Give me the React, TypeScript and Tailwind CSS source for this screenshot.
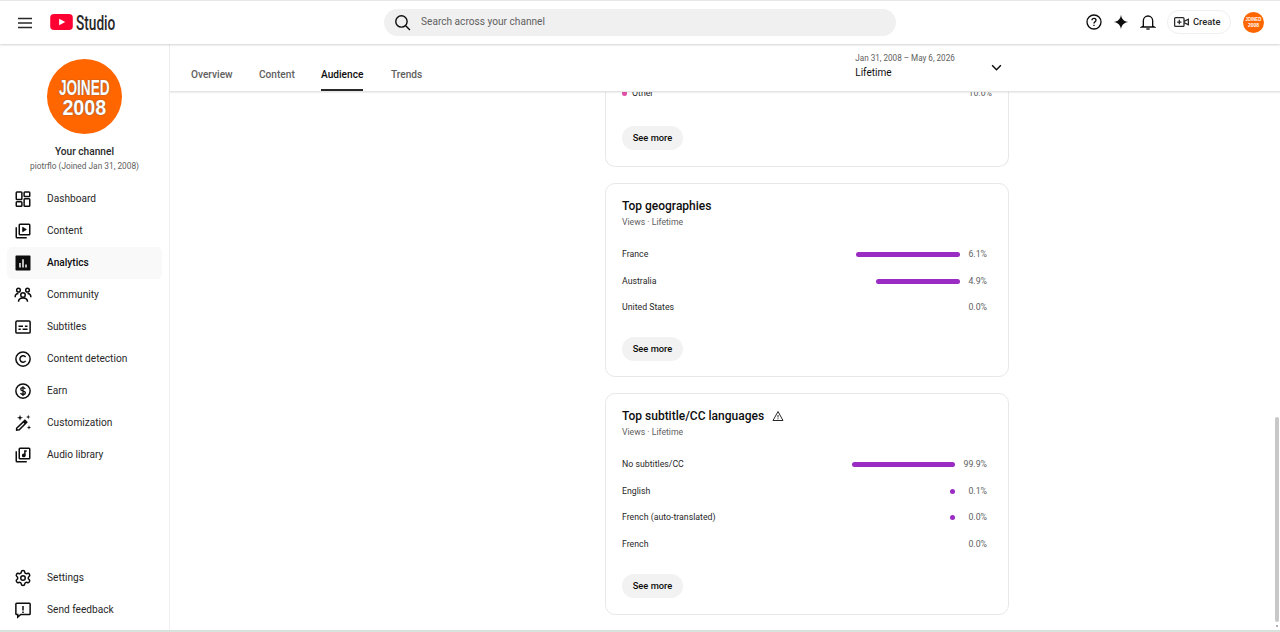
import { Settings } from "lucide-react";
import type { ReactNode } from "react";

const iconClass = "w-[18px] h-[18px] shrink-0 text-[#0d0d0d]";

function Icon({ children }: { children: ReactNode }) {
    return (
        <svg viewBox="0 0 24 24" fill="none" stroke="currentColor" strokeWidth="2" className={iconClass}>
            {children}
        </svg>
    );
}

const navItems: { label: string; active?: boolean; icon: ReactNode }[] = [
    {
        label: "Dashboard",
        icon: (
            <Icon>
                <rect x="3" y="2.500" width="7.500" height="10" rx="1" />
                <rect x="13.500" y="2.500" width="7.500" height="6" rx="1" />
                <rect x="3" y="15.500" width="7.500" height="6" rx="1" />
                <rect x="13.500" y="11.500" width="7.500" height="10" rx="1" />
            </Icon>
        ),
    },
    {
        label: "Content",
        icon: (
            <Icon>
                <rect x="7" y="3" width="14" height="14" rx="1" />
                <path d="M3 7v13a1 1 0 0 0 1 1h13" />
                <path d="M11.500 7l5 3-5 3z" fill="currentColor" strokeWidth="1" />
            </Icon>
        ),
    },
    {
        label: "Analytics",
        active: true,
        icon: (
            <svg viewBox="0 0 24 24" className={iconClass}>
                <path
                    fill="currentColor"
                    fillRule="evenodd"
                    d="M3 2h18a1 1 0 0 1 1 1v18a1 1 0 0 1-1 1H3a1 1 0 0 1-1-1V3a1 1 0 0 1 1-1zM7 12v6h2v-6zM11 7v11h2V7zM15 14v4h2v-4z"
                />
            </svg>
        ),
    },
    {
        label: "Community",
        icon: (
            <Icon>
                <circle cx="12" cy="12" r="3" />
                <circle cx="6" cy="5.500" r="2.400" />
                <circle cx="18" cy="5.500" r="2.400" />
                <path d="M6 21c0-3.500 2.500-5 6-5s6 1.500 6 5" />
                <path d="M1.500 15c0-3 1.500-5 4.500-5M22.500 15c0-3-1.500-5-4.500-5" />
            </Icon>
        ),
    },
    {
        label: "Subtitles",
        icon: (
            <Icon>
                <rect x="2.500" y="4" width="19" height="16" rx="1.500" />
                <path d="M6 11h6M14.500 11h3.500M6 15h3M11.500 15h6.500" />
            </Icon>
        ),
    },
    {
        label: "Content detection",
        icon: (
            <Icon>
                <circle cx="12" cy="12" r="9.500" />
                <path d="M15.500 9.500a4.200 4.200 0 1 0 0 5" />
            </Icon>
        ),
    },
    {
        label: "Earn",
        icon: (
            <Icon>
                <circle cx="12" cy="12" r="9.500" />
                <path d="M15 9.200c-.5-1.200-1.700-1.700-3-1.700-1.700 0-3 .9-3 2.300 0 3.200 6.200 1.500 6.200 4.500 0 1.400-1.400 2.200-3.200 2.200-1.500 0-2.700-.6-3.200-1.900M12 5.500v13" strokeWidth="1.700" />
            </Icon>
        ),
    },
    {
        label: "Customization",
        icon: (
            <svg viewBox="0 0 24 24" className={iconClass}>
                <path d="M14.500 8.500l2.500 2.500L7 21l-3.500.5L3.500 19z" fill="none" stroke="currentColor" strokeWidth="2" />
                <path d="M11.500 10.500l3 3 2.500-2.500-2.500-2.500z" fill="currentColor" />
                <path d="M8 1l1 3 3 1-3 1-1 3-1-3-3-1 3-1zM19 1l.8 2.200L22 4l-2.200.8L19 7l-.8-2.200L16 4l2.200-.8zM20 15l.8 2.200L23 18l-2.200.8L20 21l-.8-2.200L17 18l2.200-.8z" fill="currentColor" />
            </svg>
        ),
    },
    {
        label: "Audio library",
        icon: (
            <Icon>
                <rect x="7" y="3" width="14" height="14" rx="1" />
                <path d="M3 7v13a1 1 0 0 0 1 1h13" />
                <circle cx="13" cy="12.500" r="1.500" fill="currentColor" />
                <path d="M14.500 12.500V6.500h2.500" />
            </Icon>
        ),
    },
];

function Sidebar() {
    return (
        <aside className="w-[170px] shrink-0 border-r border-[#efefef] flex flex-col pt-[15px] pb-[4px] bg-white">
            <div className="flex flex-col items-center">
                <div className="w-[75px] h-[75px] rounded-full bg-[#ff6600] flex flex-col items-center justify-center text-white font-bold leading-[20px] text-[20px] font-['Liberation_Sans',sans-serif] [text-shadow:0_0_1.5px_#555]">
                    <span className="scale-x-[0.68] scale-y-[1.12]">JOINED</span>
                    <span className="scale-x-[0.98] scale-y-[1.12]">2008</span>
                </div>
                <div className="mt-[11px] text-[10.13px] leading-[14px] font-medium text-[#282828]">Your channel</div>
                <div className="mt-[1px] text-[8.33px] leading-[13px] text-[#606060]">piotrflo (Joined Jan 31, 2008)</div>
            </div>

            <nav className="mt-[10px] px-[7px] flex flex-col">
                {navItems.map((item) => (
                    <div
                        key={item.label}
                        className={`h-[32px] pl-[7px] rounded-[5px] flex items-center gap-[15px] text-[10.13px] ${item.active ? "bg-[#f9f9f9] font-medium text-[#0d0d0d]" : "text-[#282828]"}`}
                    >
                        {item.icon}
                        <span>{item.label}</span>
                    </div>
                ))}
            </nav>

            <div className="mt-auto px-[7px] flex flex-col">
                <div className="h-[32px] pl-[7px] flex items-center gap-[15px] text-[10.13px] text-[#282828]">
                    <Settings className={iconClass} strokeWidth={2} />
                    <span>Settings</span>
                </div>
                <div className="h-[32px] pl-[7px] flex items-center gap-[15px] text-[10.13px] text-[#282828]">
                    <Icon>
                        <path d="M3.500 3h17a1 1 0 0 1 1 1v13a1 1 0 0 1-1 1H9l-4 3.500V18H3.500a1 1 0 0 1-1-1V4a1 1 0 0 1 1-1z" />
                        <path d="M12 6.500v6M12 14v2" />
                    </Icon>
                    <span>Send feedback</span>
                </div>
            </div>
        </aside>
    );
}

function Header() {
    return (
        <header className="relative z-20 h-[44px] shrink-0 bg-white border-t border-[#e8e8e8] shadow-[0_1px_2px_rgba(0,0,0,0.18)] flex items-center pl-[18px] pr-[16px]">
            <svg viewBox="0 0 14 12" className="w-[14px] h-[12px] text-[#282828]" fill="none" stroke="currentColor" strokeWidth="1.400">
                <path d="M0 1.500h14M0 6h14M0 10.500h14" />
            </svg>
            <div className="ml-[18px] flex items-center w-[66px]">
                <svg viewBox="0 0 24 17" className="w-[23px] h-[16px] shrink-0 -mt-px">
                    <rect width="24" height="17" rx="4" fill="#ff0033" />
                    <path d="M9.500 5l6.500 3.500-6.500 3.500z" fill="#fff" />
                </svg>
                <span className="ml-[3px] inline-block origin-left scale-x-[0.65] text-[#282828] text-[21px] leading-[24px] font-medium font-['Roboto',sans-serif]">Studio</span>
            </div>
            <div className="ml-[268px] w-[512px] h-[27px] rounded-full bg-[#f0f0f0] flex items-center pl-[10px]">
                <svg viewBox="0 0 24 24" className="w-[17px] h-[17px] text-[#0d0d0d]" fill="none" stroke="currentColor" strokeWidth="2">
                    <circle cx="10.500" cy="10.500" r="8" />
                    <path d="M16.500 16.500l6 6" />
                </svg>
                <span className="ml-[10px] -mt-px text-[10.13px] text-[#606060]">Search across your channel</span>
            </div>
            <div className="ml-auto flex items-center -mt-px">
                <svg viewBox="0 0 24 24" className="w-[16px] h-[16px] text-[#0d0d0d]" fill="none" stroke="currentColor" strokeWidth="2">
                    <circle cx="12" cy="12" r="10.500" />
                    <path d="M9 9.500c0-1.800 1.300-3 3-3s3 1.100 3 2.700c0 2.300-3 2.500-3 5" />
                    <path d="M12 16v2" />
                </svg>
                <svg viewBox="0 0 24 24" className="ml-[11px] w-[16px] h-[16px] text-[#0d0d0d]">
                    <path fill="currentColor" d="M12 1c.8 6.500 4.500 10.200 11 11-6.500.8-10.200 4.500-11 11-.8-6.500-4.500-10.200-11-11 6.500-.8 10.200-4.500 11-11z" />
                </svg>
                <svg viewBox="0 0 24 24" className="ml-[11px] w-[16px] h-[16px] text-[#0d0d0d]" fill="none" stroke="currentColor" strokeWidth="2">
                    <path d="M5 18v-8a7 7 0 0 1 14 0v8l2.500 1.500h-19z" />
                    <path d="M9.500 22.500h5" />
                </svg>
                <div className="ml-[11px] w-[64px] h-[24px] rounded-full border border-[#efefef] flex items-center pl-[6px] gap-[4px] text-[9.33px] font-medium text-[#282828]">
                    <svg viewBox="0 0 24 18" className="w-[15px] h-[12px]" fill="none" stroke="currentColor" strokeWidth="2">
                        <rect x="1" y="2" width="15" height="14" rx="1.500" />
                        <path d="M16 8l7-3.500v9L16 10" />
                        <path d="M8.500 5.500v7M5 9h7" />
                    </svg>
                    <span>Create</span>
                </div>
                <div className="ml-[12px] w-[21px] h-[21px] rounded-full bg-[#ff6600] flex flex-col items-center justify-center text-white font-bold text-[5px] leading-[6px] font-['Liberation_Sans',sans-serif]">
                    <span className="scale-x-[0.85]">JOINED</span>
                    <span>2008</span>
                </div>
            </div>
        </header>
    );
}

function TabBar() {
    return (
        <div className="relative z-10 h-[48px] shrink-0 bg-white border-b border-[#e5e5e5] shadow-[0_1px_1px_rgba(0,0,0,0.06)] flex pl-[21px] text-[10.13px] font-medium text-[#606060]">
            <div className="pt-[23px] w-[68px]">Overview</div>
            <div className="pt-[23px] w-[62px]">Content</div>
            <div className="pt-[23px] w-[42px] relative text-[#0d0d0d]">
                Audience
                <div className="absolute left-0 right-0 bottom-0 h-[2px] bg-[#282828]" />
            </div>
            <div className="pt-[23px] ml-[28px]">Trends</div>
            <div className="ml-[433px] pt-[9px] font-normal">
                <div className="text-[8.13px] leading-[11px] text-[#606060]">Jan 31, 2008 – May 6, 2026</div>
                <div className="mt-[2px] text-[10px] leading-[14px] text-[#0d0d0d]">Lifetime</div>
            </div>
            <svg viewBox="0 0 12 8" className="ml-[36px] mt-[20px] w-[11px] h-[7px] text-[#0d0d0d]" fill="none" stroke="currentColor" strokeWidth="1.700">
                <path d="M1 1.500l5 5 5-5" />
            </svg>
        </div>
    );
}

function Row({ label, pct, bar, column }: { label: string; pct: string; bar?: number; column: string }) {
    return (
        <div className="h-[26.67px] flex items-center text-[8.75px] text-[#282828]">
            <span>{label}</span>
            <div className="ml-auto flex items-center">
                {bar !== undefined && (
                    <div className="h-[5px] rounded-full bg-[#9a2cc4]" style={{ width: bar }} />
                )}
                <span className={`${column} text-right text-[#606060]`}>{pct}</span>
            </div>
        </div>
    );
}

function SeeMore() {
    return (
        <div className="w-[61px] h-[24px] rounded-full bg-[#f2f2f2] flex items-center justify-center text-[9.33px] font-medium text-[#0d0d0d]">
            See more
        </div>
    );
}

function Card({ title, warn, children }: { title: string; warn?: boolean; children: ReactNode }) {
    return (
        <section className={`w-[404px] rounded-[10px] border border-[#e8e8e8] pt-[13px] px-[16px] bg-white ${warn ? "pb-[16px]" : "pb-[15px]"}`}>
            <div className="flex items-center h-[18px] text-[12px] font-medium text-[#0d0d0d]">
                <span>{title}</span>
                {warn && (
                    <svg viewBox="0 0 24 24" className="ml-[8px] w-[12px] h-[12px] text-[#282828]" fill="none" stroke="currentColor" strokeWidth="2">
                        <path d="M12 3L2 21h20z" />
                        <path d="M12 10v5M12 16.500v2" />
                    </svg>
                )}
            </div>
            <div className="mt-[1px] h-[13px] text-[8.67px] leading-[13px] text-[#606060]">Views · Lifetime</div>
            <div className="mt-[12.4px] pr-[5px]">{children}</div>
            <div className="mt-[15.6px]">
                <SeeMore />
            </div>
        </section>
    );
}

export default function App() {
    return (
        <div className="h-[632px] w-[1280px] overflow-hidden flex flex-col bg-white font-['Roboto',sans-serif]">
            <Header />
            <div className="flex flex-1 min-h-0">
                <Sidebar />
                <main className="relative flex-1 min-w-0 flex flex-col">
                    <TabBar />
                    <div className="flex-1 min-h-0 overflow-hidden pl-[435px]">
                        <div className="-mt-[8px] flex flex-col gap-[16px]">
                            {/* First card is scrolled under the tab bar */}
                            <section className="w-[404px] h-[83px] rounded-b-[10px] border border-t-0 border-[#e8e8e8] px-[16px] bg-white">
                                <div className="h-[19px] flex items-center text-[8.75px] text-[#282828]">
                                    <span className="w-[5px] h-[5px] rounded-full bg-[#e34fa6]" />
                                    <span className="ml-[5px]">Other</span>
                                    <span className="ml-auto text-[#606060]">10.0%</span>
                                </div>
                                <div className="mt-[23px]">
                                    <SeeMore />
                                </div>
                            </section>

                            <Card title="Top geographies">
                                <Row label="France" pct="6.1%" bar={104} column="w-[27px]" />
                                <Row label="Australia" pct="4.9%" bar={84} column="w-[27px]" />
                                <Row label="United States" pct="0.0%" column="w-[27px]" />
                            </Card>

                            <Card title="Top subtitle/CC languages" warn>
                                <Row label="No subtitles/CC" pct="99.9%" bar={103} column="w-[32px]" />
                                <Row label="English" pct="0.1%" bar={5} column="w-[32px]" />
                                <Row label="French (auto-translated)" pct="0.0%" bar={5} column="w-[32px]" />
                                <Row label="French" pct="0.0%" column="w-[32px]" />
                            </Card>
                        </div>
                    </div>
                    {/* Scrollbar */}
                    <div className="absolute right-px top-[373px] w-[4px] h-[205px] rounded-full bg-[#c8c8c8]" />
                    <div className="absolute right-[2px] top-[581px] w-[2px] h-[2px] bg-[#b0b0b0]" />
                </main>
            </div>
            <div className="h-[2px] shrink-0 bg-[#d5e3dc]" />
        </div>
    );
}
